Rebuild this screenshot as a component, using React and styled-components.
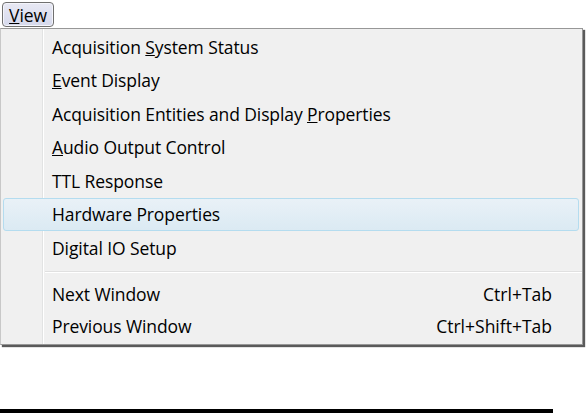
import styled, { createGlobalStyle } from 'styled-components'

const Global = createGlobalStyle`
    html, body {
        margin: 0;
        padding: 0;
        background: #ffffff;
        font-family: "Open Sans", "Noto Sans", "DejaVu Sans", sans-serif;
    }
    #root {
        width: 586px;
        height: 413px;
        overflow: hidden;
    }
`

const Page = styled.div`
    width: 586px;
    height: 413px;
    display: flex;
    flex-direction: column;
`

const MenuBar = styled.div`
    height: 28px;
    display: flex;
    align-items: flex-start;
    padding: 2px 0 0 2px;
    box-sizing: border-box;
`

const BarButton = styled.div`
    width: 52px;
    height: 25px;
    box-sizing: border-box;
    border: 1px solid #707070;
    border-radius: 4px;
    background: linear-gradient(#e8e9f4, #d6d9ec);
    box-shadow: inset 0 0 0 1px #f4f5fb;
    display: flex;
    align-items: center;
    justify-content: center;
    font-size: 17.5px;
    color: #000;
    letter-spacing: -0.1px;
`

const Menu = styled.div`
    width: 583px;
    box-sizing: border-box;
    background: #f0f0f0;
    border: 1px solid #979797;
    border-left-color: #c8c8c8;
    box-shadow: 2px 2px 1px #5a5a5a;
    padding: 1px 0 2px 0;
    position: relative;
    display: flex;
    flex-direction: column;

    &::before {
        content: '';
        position: absolute;
        top: 0;
        bottom: 0;
        left: 41px;
        width: 1px;
        background: #e2e3e3;
        box-shadow: 1px 0 0 #ffffff;
    }
`

const Row = styled.div`
    position: relative;
    height: ${p => p.$h}px;
    margin: 0 3px 0 2px;
    padding: 0 26px 0 48px;
    box-sizing: border-box;
    display: flex;
    align-items: center;
    justify-content: space-between;
    border: 1px solid transparent;
    border-radius: 3px;
    font-size: 17.5px;
    color: #000;
    letter-spacing: -0.1px;
    white-space: nowrap;

    ${p => p.$active && `
        background: linear-gradient(#e9f1f7, #dbeaf3);
        border-color: #b4dcef;
        z-index: 1;
    `}
`

const Separator = styled.div`
    height: 13.5px;
    display: flex;
    align-items: center;
    padding-left: 44px;

    &::after {
        content: '';
        flex: 1;
        height: 1px;
        background: #e0e0e0;
        box-shadow: 0 1px 0 #ffffff;
    }
`

const Shortcut = styled.span`
    color: #000;
    letter-spacing: 0;
`

const Key = styled.span`
    text-decoration: underline;
`

const Rule = styled.div`
    margin-top: auto;
    width: 553px;
    height: 4px;
    background: #000;
`

const Label = ({ text, k }) => {
    if (k === undefined) return <span>{text}</span>
    return (
        <span>
            {text.slice(0, k)}
            <Key>{text[k]}</Key>
            {text.slice(k + 1)}
        </span>
    )
}

const items = [
    { text: 'Acquisition System Status', k: 12 },
    { text: 'Event Display', k: 0 },
    { text: 'Acquisition Entities and Display Properties', k: 33 },
    { text: 'Audio Output Control', k: 0 },
    { text: 'TTL Response' },
    { text: 'Hardware Properties', active: true },
    { text: 'Digital IO Setup' },
]

const windows = [
    { text: 'Next Window', key: 'Ctrl+Tab' },
    { text: 'Previous Window', key: 'Ctrl+Shift+Tab' },
]

const App = () => {
    return (
        <Page>
            <Global />
            <MenuBar>
                <BarButton>
                    <Label text="View" k={0} />
                </BarButton>
            </MenuBar>
            <Menu>
                {items.map(it => (
                    <Row key={it.text} $h={33.5} $active={it.active}>
                        <Label text={it.text} k={it.k} />
                    </Row>
                ))}
                <Separator />
                {windows.map(w => (
                    <Row key={w.text} $h={32}>
                        <span>{w.text}</span>
                        <Shortcut>{w.key}</Shortcut>
                    </Row>
                ))}
            </Menu>
            <Rule />
        </Page>
    )
}

export default App
